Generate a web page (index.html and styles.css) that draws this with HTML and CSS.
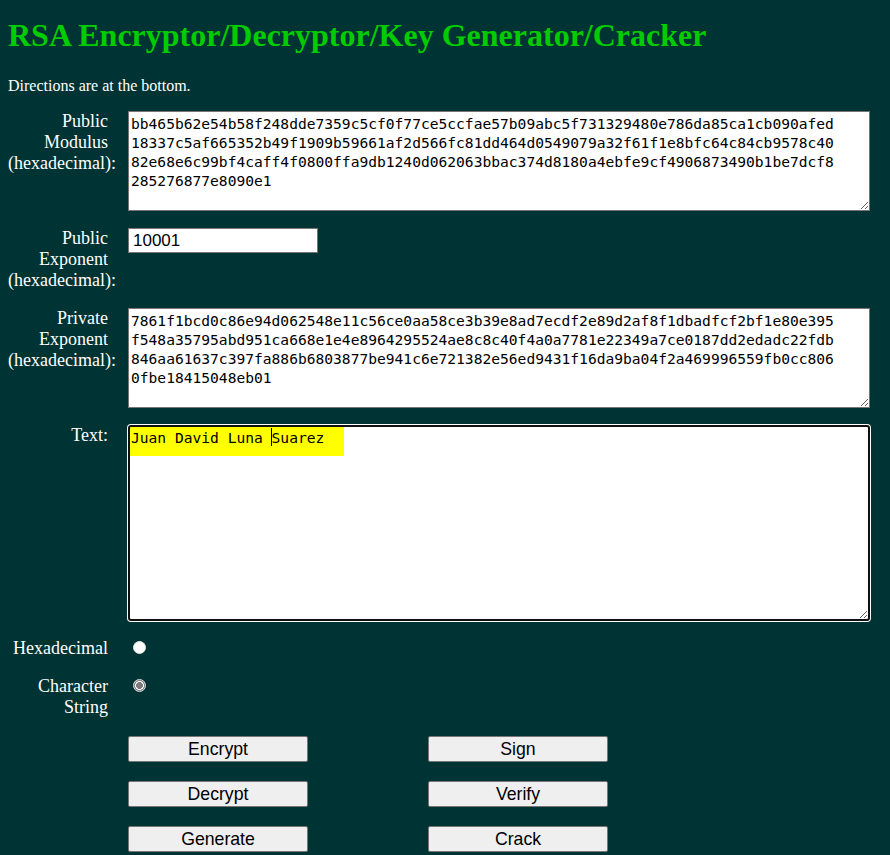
FILE: index.html
```html
<!DOCTYPE html>
<html lang="en">
<head>
<meta charset="utf-8">
<title>RSA Encryptor/Decryptor/Key Generator/Cracker</title>
<link rel="stylesheet" href="styles.css">
</head>
<body>
<h1 class="title">RSA Encryptor/Decryptor/Key Generator/Cracker</h1>
<p class="intro">Directions are at the bottom.</p>
<form class="rsa">
  <label class="lbl" for="mod">Public Modulus (hexadecimal):</label>
  <textarea id="mod" class="hex" spellcheck="false">bb465b62e54b58f248dde7359c5cf0f77ce5ccfae57b09abc5f731329480e786da85ca1cb090afed
18337c5af665352b49f1909b59661af2d566fc81dd464d0549079a32f61f1e8bfc64c84cb9578c40
82e68e6c99bf4caff4f0800ffa9db1240d062063bbac374d8180a4ebfe9cf4906873490b1be7dcf8
285276877e8090e1</textarea>

  <label class="lbl" for="pubexp">Public Exponent (hexadecimal):</label>
  <div class="field"><input id="pubexp" class="exp" type="text" value="10001"></div>

  <label class="lbl" for="privexp">Private Exponent (hexadecimal):</label>
  <textarea id="privexp" class="hex" spellcheck="false">7861f1bcd0c86e94d062548e11c56ce0aa58ce3b39e8ad7ecdf2e89d2af8f1dbadfcf2bf1e80e395
f548a35795abd951ca668e1e4e8964295524ae8c8c40f4a0a7781e22349a7ce0187dd2edadc22fdb
846aa61637c397fa886b6803877be941c6e721382e56ed9431f16da9ba04f2a469996559fb0cc806
0fbe18415048eb01</textarea>

  <label class="lbl" for="txt">Text:</label>
  <textarea id="txt" class="hex text-area" spellcheck="false">Juan David Luna Suarez</textarea>

  <label class="lbl" for="fmt-hex">Hexadecimal</label>
  <div class="field"><input id="fmt-hex" class="radio" type="radio" name="fmt"></div>

  <label class="lbl" for="fmt-str">Character String</label>
  <div class="field"><input id="fmt-str" class="radio" type="radio" name="fmt" checked></div>

  <div class="buttons">
    <button type="button" class="btn">Encrypt</button>
    <button type="button" class="btn">Sign</button>
    <button type="button" class="btn">Decrypt</button>
    <button type="button" class="btn">Verify</button>
    <button type="button" class="btn">Generate</button>
    <button type="button" class="btn">Crack</button>
  </div>
</form>
</body>
</html>
```
FILE: styles.css
```css
html {
  overflow: hidden;
  background: #003333;
}

body {
  margin: 8px 8px 0;
  background: #003333;
  color: #ffffff;
  font-family: "Liberation Serif", "Times New Roman", serif;
  font-size: 16px;
}

.title {
  margin: 9px 0 0;
  font-size: 32px;
  font-weight: bold;
  color: #00cc00;
  line-height: normal;
}

.intro {
  margin: 23px 0 16px;
  font-size: 16px;
}

.rsa {
  display: grid;
  grid-template-columns: 100px 742px;
  column-gap: 20px;
  row-gap: 17px;
  align-items: start;
}

.lbl {
  display: block;
  text-align: right;
  font-size: 18px;
  line-height: normal;
  color: #ffffff;
}

.field {
  display: block;
}

.hex {
  display: block;
  box-sizing: border-box;
  width: 742px;
  height: 100px;
  margin: 0;
  padding: 2px;
  border: 1px solid #767676;
  border-radius: 0;
  background: #ffffff;
  color: #000000;
  font-family: "DejaVu Sans Mono", "Liberation Mono", monospace;
  font-size: 14.6px;
  line-height: 19px;
  resize: both;
  overflow: hidden;
  white-space: pre-wrap;
}

.text-area {
  height: 196px;
  border: 2px solid #101010;
  border-radius: 3px;
  padding: 1px;
  box-shadow: 0 0 0 1px #ffffff;
  background-color: #ffffff;
  background-image:
    linear-gradient(#000000, #000000),
    linear-gradient(#ffff00, #ffff00);
  background-repeat: no-repeat, no-repeat;
  background-position: 141px 1px, 0 0;
  background-size: 1px 18px, 214px 29px;
}

.exp {
  display: block;
  box-sizing: border-box;
  width: 190px;
  height: 25px;
  margin: 0;
  padding: 1px 4px;
  border: 1px solid #767676;
  border-radius: 0;
  background: #ffffff;
  color: #000000;
  font-family: "Liberation Sans", Arial, sans-serif;
  font-size: 17px;
}

.radio {
  -webkit-appearance: none;
  appearance: none;
  display: block;
  box-sizing: border-box;
  width: 13px;
  height: 13px;
  margin: 3px 0 0 5px;
  border: 1px solid #e4e4e4;
  border-radius: 50%;
  background: #ffffff;
}

.radio:checked {
  border-color: #e0e0e0;
  background: radial-gradient(circle at center, #7b7b7b 0 3.2px, #ffffff 3.7px 4.2px, #7b7b7b 4.7px);
}

.buttons {
  grid-column: 2;
  display: grid;
  grid-template-columns: 180px 180px;
  column-gap: 120px;
  row-gap: 19px;
  margin-top: 1px;
}

.btn {
  -webkit-appearance: none;
  appearance: none;
  box-sizing: border-box;
  width: 180px;
  height: 26px;
  margin: 0;
  padding: 0 6px;
  border: 1px solid #767676;
  border-radius: 2px;
  background: #efefef;
  color: #000000;
  font-family: "Liberation Sans", Arial, sans-serif;
  font-size: 17.7px;
  line-height: 23px;
  text-align: center;
}
```
